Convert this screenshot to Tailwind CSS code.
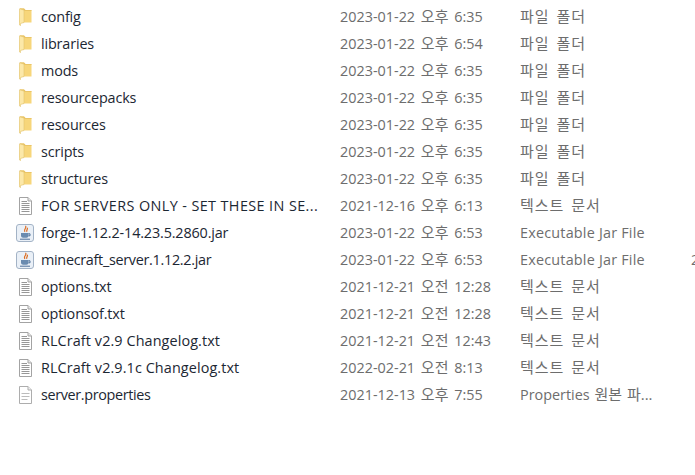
<!DOCTYPE html>
<html lang="ko">
<head>
    <meta charset="UTF-8">
    <title>Files</title>
    <script src="https://cdn.jsdelivr.net/npm/@tailwindcss/browser@4"></script>
</head>
<body class="bg-white overflow-hidden w-[695px] h-[475px] font-['Open_Sans','Noto_Sans_CJK_KR',sans-serif] text-[14.4px]">
    <svg width="0" height="0" class="absolute">
        <symbol id="folder" viewBox="0 0 13 18">
            <path d="M1 .5h4l1.500 1.500h6v12.500h-12z" fill="#f7d67a"/>
            <path d="M1 .5h4l1.500 1.500h6v.7h-7l-1-1h-3.500z" fill="#e6c062"/>
            <path d="M.5 .8l4.500 1.200v12.500l-3.500 1v2.200l-1-.7z" fill="#fce8a8" stroke="#e3c26c" stroke-width=".6"/>
        </symbol>
        <symbol id="doc" viewBox="0 0 15 18">
            <path d="M1.500 .5h8.500l3.500 3.500v13.500h-12z" fill="#fff" stroke="#a3a3a3"/>
            <path d="M10 .5v3.500h3.500" fill="#e8e8e8" stroke="#a3a3a3"/>
            <path d="M3.500 4.500h5.500M3.500 6.500h8M3.500 8.500h8M3.500 10.500h8M3.500 12.500h8M3.500 14.500h8" stroke="#979797"/>
        </symbol>
        <symbol id="prop" viewBox="0 0 15 18">
            <path d="M1.500 .5h8.500l3.500 3.500v13.500h-12z" fill="#fff" stroke="#adadad"/>
            <path d="M10 .5v3.500h3.500" fill="#f0f0f0" stroke="#adadad"/>
            <path d="M3.500 7.500h8M3.500 10.500h8M3.500 13.500h6" stroke="#bcbcbc"/>
        </symbol>
        <symbol id="jar" viewBox="0 0 18 18">
            <rect x=".5" y=".5" width="17" height="17" rx="2.500" fill="#eaf0f7" stroke="#a3b3c6"/>
            <path d="M9.500 1.800c2 2.200-2.500 3.200-.6 6M11.300 3.800c.6 1.600-1.200 2.200-.4 3.900" fill="none" stroke="#dd6a1c" stroke-width="1.200"/>
            <path d="M5 9h7.500v2.800c0 1.200-1 2-2 2h-3.500c-1 0-2-.8-2-2z" fill="#6a8bb0"/>
            <path d="M12.500 9.800h1.500v2h-1.500M4 15.200h10" fill="none" stroke="#4d6f98"/>
        </symbol>
    </svg>

    <div class="pt-[3px] flex flex-col text-[#6d6d6d] [word-spacing:2px]">
        <div class="flex items-center h-[27px]"><svg class="ml-[19px] w-[13px] h-[18px] shrink-0"><use href="#folder"/></svg><span class="ml-[9px] w-[299px] shrink-0 whitespace-nowrap tracking-[-0.15px] text-[#1c2733]">config</span><span class="w-[180px] shrink-0">2023-01-22 <span class="text-[15px]">오후</span> 6:35</span><span class="text-[15px] tracking-[1px]">파일 폴더</span></div>
        <div class="flex items-center h-[27px]"><svg class="ml-[19px] w-[13px] h-[18px] shrink-0"><use href="#folder"/></svg><span class="ml-[9px] w-[299px] shrink-0 whitespace-nowrap tracking-[-0.15px] text-[#1c2733]">libraries</span><span class="w-[180px] shrink-0">2023-01-22 <span class="text-[15px]">오후</span> 6:54</span><span class="text-[15px] tracking-[1px]">파일 폴더</span></div>
        <div class="flex items-center h-[27px]"><svg class="ml-[19px] w-[13px] h-[18px] shrink-0"><use href="#folder"/></svg><span class="ml-[9px] w-[299px] shrink-0 whitespace-nowrap tracking-[-0.15px] text-[#1c2733]">mods</span><span class="w-[180px] shrink-0">2023-01-22 <span class="text-[15px]">오후</span> 6:35</span><span class="text-[15px] tracking-[1px]">파일 폴더</span></div>
        <div class="flex items-center h-[27px]"><svg class="ml-[19px] w-[13px] h-[18px] shrink-0"><use href="#folder"/></svg><span class="ml-[9px] w-[299px] shrink-0 whitespace-nowrap tracking-[-0.15px] text-[#1c2733]">resourcepacks</span><span class="w-[180px] shrink-0">2023-01-22 <span class="text-[15px]">오후</span> 6:35</span><span class="text-[15px] tracking-[1px]">파일 폴더</span></div>
        <div class="flex items-center h-[27px]"><svg class="ml-[19px] w-[13px] h-[18px] shrink-0"><use href="#folder"/></svg><span class="ml-[9px] w-[299px] shrink-0 whitespace-nowrap tracking-[-0.15px] text-[#1c2733]">resources</span><span class="w-[180px] shrink-0">2023-01-22 <span class="text-[15px]">오후</span> 6:35</span><span class="text-[15px] tracking-[1px]">파일 폴더</span></div>
        <div class="flex items-center h-[27px]"><svg class="ml-[19px] w-[13px] h-[18px] shrink-0"><use href="#folder"/></svg><span class="ml-[9px] w-[299px] shrink-0 whitespace-nowrap tracking-[-0.15px] text-[#1c2733]">scripts</span><span class="w-[180px] shrink-0">2023-01-22 <span class="text-[15px]">오후</span> 6:35</span><span class="text-[15px] tracking-[1px]">파일 폴더</span></div>
        <div class="flex items-center h-[27px]"><svg class="ml-[19px] w-[13px] h-[18px] shrink-0"><use href="#folder"/></svg><span class="ml-[9px] w-[299px] shrink-0 whitespace-nowrap tracking-[-0.15px] text-[#1c2733]">structures</span><span class="w-[180px] shrink-0">2023-01-22 <span class="text-[15px]">오후</span> 6:35</span><span class="text-[15px] tracking-[1px]">파일 폴더</span></div>
        <div class="flex items-center h-[27px]"><svg class="ml-[18px] w-[15px] h-[18px] shrink-0"><use href="#doc"/></svg><span class="ml-[8px] w-[299px] shrink-0 whitespace-nowrap tracking-[0.4px] [word-spacing:0] text-[#1c2733]">FOR SERVERS ONLY - SET THESE IN SE...</span><span class="w-[180px] shrink-0">2021-12-16 <span class="text-[15px]">오후</span> 6:13</span><span class="text-[15px] tracking-[1px]">텍스트 문서</span></div>
        <div class="flex items-center h-[27px]"><svg class="ml-[16px] w-[18px] h-[18px] shrink-0"><use href="#jar"/></svg><span class="ml-[7px] w-[299px] shrink-0 whitespace-nowrap tracking-[-0.15px] text-[#1c2733]">forge-1.12.2-14.23.5.2860.jar</span><span class="w-[180px] shrink-0">2023-01-22 <span class="text-[15px]">오후</span> 6:53</span><span class="tracking-[0.2px] [word-spacing:0]">Executable Jar File</span></div>
        <div class="flex items-center h-[27px] relative"><svg class="ml-[16px] w-[18px] h-[18px] shrink-0"><use href="#jar"/></svg><span class="ml-[7px] w-[299px] shrink-0 whitespace-nowrap tracking-[-0.3px] text-[#1c2733]">minecraft_server.1.12.2.jar</span><span class="w-[180px] shrink-0">2023-01-22 <span class="text-[15px]">오후</span> 6:53</span><span class="tracking-[0.2px] [word-spacing:0]">Executable Jar File</span><span class="absolute left-[691px]">2</span></div>
        <div class="flex items-center h-[27px]"><svg class="ml-[18px] w-[15px] h-[18px] shrink-0"><use href="#doc"/></svg><span class="ml-[8px] w-[299px] shrink-0 whitespace-nowrap tracking-[-0.15px] text-[#1c2733]">options.txt</span><span class="w-[180px] shrink-0">2021-12-21 <span class="text-[15px]">오전</span> 12:28</span><span class="text-[15px] tracking-[1px]">텍스트 문서</span></div>
        <div class="flex items-center h-[27px]"><svg class="ml-[18px] w-[15px] h-[18px] shrink-0"><use href="#doc"/></svg><span class="ml-[8px] w-[299px] shrink-0 whitespace-nowrap tracking-[-0.15px] text-[#1c2733]">optionsof.txt</span><span class="w-[180px] shrink-0">2021-12-21 <span class="text-[15px]">오전</span> 12:28</span><span class="text-[15px] tracking-[1px]">텍스트 문서</span></div>
        <div class="flex items-center h-[27px]"><svg class="ml-[18px] w-[15px] h-[18px] shrink-0"><use href="#doc"/></svg><span class="ml-[8px] w-[299px] shrink-0 whitespace-nowrap tracking-[0.1px] [word-spacing:0] text-[#1c2733]">RLCraft v2.9 Changelog.txt</span><span class="w-[180px] shrink-0">2021-12-21 <span class="text-[15px]">오전</span> 12:43</span><span class="text-[15px] tracking-[1px]">텍스트 문서</span></div>
        <div class="flex items-center h-[27px]"><svg class="ml-[18px] w-[15px] h-[18px] shrink-0"><use href="#doc"/></svg><span class="ml-[8px] w-[299px] shrink-0 whitespace-nowrap tracking-[0.1px] [word-spacing:0] text-[#1c2733]">RLCraft v2.9.1c Changelog.txt</span><span class="w-[180px] shrink-0">2022-02-21 <span class="text-[15px]">오전</span> 8:13</span><span class="text-[15px] tracking-[1px]">텍스트 문서</span></div>
        <div class="flex items-center h-[27px]"><svg class="ml-[18px] w-[15px] h-[18px] shrink-0"><use href="#prop"/></svg><span class="ml-[8px] w-[299px] shrink-0 whitespace-nowrap tracking-[-0.35px] text-[#1c2733]">server.properties</span><span class="w-[180px] shrink-0">2021-12-13 <span class="text-[15px]">오후</span> 7:55</span><span class="[word-spacing:1px]">Properties <span class="text-[15px]">원본 파...</span></span></div>
    </div>
</body>
</html>
